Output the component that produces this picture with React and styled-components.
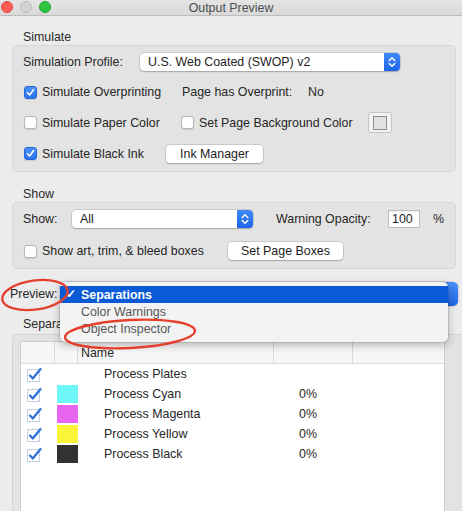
import React from "react";
import styled, { createGlobalStyle } from "styled-components";

const Global = createGlobalStyle`
  html, body { margin: 0; padding: 0; background: #ececec; }
  body { font-family: "Liberation Sans", Arial, Helvetica, sans-serif; }
  * { box-sizing: border-box; }
`;

const Window = styled.div`
  position: relative;
  width: 462px;
  height: 511px;
  overflow: hidden;
  background: #ececec;
  display: flex;
  flex-direction: column;
  font-size: 12.4px;
  color: #262626;
`;

const TitleBar = styled.div`
  flex-shrink: 0;
  height: 16px;
  display: grid;
  grid-template-columns: 1fr auto 1fr;
  align-items: center;
  background: linear-gradient(#e4e4e4, #d9d9d9);
  border-bottom: 1px solid #bdbdbd;
`;

const Lights = styled.div`
  display: flex;
  gap: 7px;
  padding-left: 1px;
  margin-top: -1px;
`;

const Light = styled.span`
  width: 12px;
  height: 12px;
  border-radius: 50%;
  background: ${(p) => p.$c};
  border: 0.5px solid ${(p) => p.$b};
`;

const Title = styled.div`
  font-size: 12.4px;
  color: #4d4d4d;
  line-height: 14px;
`;

const Content = styled.div`
  flex: 1;
  display: flex;
  flex-direction: column;
  padding-left: 12px;
  min-height: 0;
`;

const SectionLabel = styled.div`
  margin: ${(p) => p.$mt || 13}px 0 0 11px;
  height: 16px;
  line-height: 16px;
  color: #2a2a2a;
`;

const GroupBox = styled.div`
  width: 444px;
  background: #e3e3e3;
  border: 1px solid #d6d6d6;
  border-radius: 5px;
  padding: ${(p) => p.$pt || 0}px 0 0 10px;
  display: flex;
  flex-direction: column;
`;

const Row = styled.div`
  height: ${(p) => p.$h}px;
  display: flex;
  align-items: center;
  white-space: nowrap;
`;

const Cell = styled.div`
  width: ${(p) => p.$w}px;
  margin-left: ${(p) => p.$ml || 0}px;
  flex-shrink: 0;
  display: flex;
  align-items: center;
  gap: 5px;
`;

const Box = styled.span`
  width: 13px;
  height: 13px;
  margin-left: 1px;
  border-radius: 3px;
  display: inline-flex;
  align-items: center;
  justify-content: center;
  flex-shrink: 0;
  background: ${(p) => (p.$on ? "linear-gradient(#4a90f8, #2a74f0)" : "#ffffff")};
  border: 1px solid ${(p) => (p.$on ? "#2566d6" : "#b7b7b7")};
  box-shadow: 0 0.5px 1px rgba(0, 0, 0, 0.12);
`;

const Check = ({ on }) => (
  <Box $on={on}>
    {on && (
      <svg width="9" height="9" viewBox="0 0 9 9">
        <path d="M1.5 4.8 L3.6 7 L7.6 1.6" stroke="#fff" strokeWidth="1.6" fill="none" strokeLinecap="round" strokeLinejoin="round" />
      </svg>
    )}
  </Box>
);

const Select = styled.div`
  width: ${(p) => p.$w}px;
  height: 18px;
  background: #fff;
  border-radius: 4px;
  box-shadow: 0 0 0 0.5px rgba(0, 0, 0, 0.22), 0 1px 1.5px rgba(0, 0, 0, 0.18);
  display: flex;
  align-items: center;
  flex-shrink: 0;
`;

const SelectText = styled.span`
  flex: 1;
  padding-left: 8px;
  color: #1e1e1e;
`;

const Arrow = styled.span`
  width: 16px;
  height: 18px;
  border-radius: 0 4px 4px 0;
  background: linear-gradient(#3f8af7, #1e66e9);
  display: flex;
  align-items: center;
  justify-content: center;
`;

const Chevrons = () => (
  <svg width="8" height="12" viewBox="0 0 8 12">
    <path d="M1.2 4.6 L4 1.8 L6.8 4.6 M1.2 7.4 L4 10.2 L6.8 7.4" stroke="#fff" strokeWidth="1.4" fill="none" strokeLinecap="round" strokeLinejoin="round" />
  </svg>
);

const Button = styled.div`
  width: ${(p) => p.$w}px;
  height: 18px;
  background: #fff;
  border-radius: 4px;
  box-shadow: 0 0 0 0.5px rgba(0, 0, 0, 0.22), 0 1px 1.5px rgba(0, 0, 0, 0.18);
  display: flex;
  align-items: center;
  justify-content: center;
  color: #1e1e1e;
  flex-shrink: 0;
`;

const ColorWell = styled.div`
  width: 24px;
  height: 21px;
  background: #f3f3f3;
  border: 1px solid #c6c6c6;
  border-radius: 2px;
  display: flex;
  align-items: center;
  justify-content: center;
`;

const WellInner = styled.div`
  width: 14px;
  height: 14px;
  border: 1px solid #8c8c8c;
  background: #e2e2e2;
`;

const NumInput = styled.div`
  width: 32px;
  height: 18px;
  background: #fff;
  border: 1px solid #bdbdbd;
  box-shadow: inset 0 1px 0 rgba(0, 0, 0, 0.06);
  padding-left: 3px;
  display: flex;
  align-items: center;
  color: #1e1e1e;
`;

const PreviewRow = styled.div`
  position: relative;
  margin: 13px 0 0 -2px;
  height: 24px;
  display: flex;
  align-items: center;
`;

const PreviewSelect = styled.div`
  margin-left: auto;
  width: 396px;
  height: 24px;
  border-radius: 5px;
  background: linear-gradient(#4a90f8, #1f66e9);
  box-shadow: 0 0 0 0.5px rgba(0, 0, 0, 0.2);
  margin-right: 4px;
`;

const Menu = styled.div`
  position: absolute;
  left: 50px;
  top: 0;
  width: 388px;
  height: 60px;
  background: #f3f3f3;
  border-radius: 5px;
  box-shadow: 0 0 0 0.5px rgba(0, 0, 0, 0.18), 0 3px 9px rgba(0, 0, 0, 0.28);
  padding-top: 4px;
  z-index: 2;
`;

const MenuItem = styled.div`
  height: 17px;
  display: flex;
  align-items: center;
  padding-left: 21px;
  position: relative;
  background: ${(p) => (p.$sel ? "#0a5ad6" : "transparent")};
  color: ${(p) => (p.$sel ? "#ffffff" : "#565656")};
  font-weight: ${(p) => (p.$sel ? 700 : 400)};
`;

const Tick = styled.span`
  position: absolute;
  left: 6px;
  top: 0;
  line-height: 17px;
  font-weight: 700;
`;

const SepBox = styled.div`
  margin-top: 2px;
  flex: 1;
  background: #e3e3e3;
  border: 1px solid #d4d4d4;
  border-right: none;
  border-bottom: none;
  border-radius: 5px 0 0 0;
  padding: 6px 0 0 7px;
  display: flex;
  min-height: 0;
`;

const List = styled.div`
  width: 425px;
  background: #fff;
  border: 1px solid #cdcdcd;
  border-bottom: none;
  display: flex;
  flex-direction: column;
`;

const Header = styled.div`
  height: 22px;
  display: flex;
  background: #f6f6f6;
  border-bottom: 1px solid #dcdcdc;
  flex-shrink: 0;
`;

const HeadCell = styled.div`
  width: ${(p) => p.$w}px;
  flex-shrink: 0;
  border-right: ${(p) => (p.$last ? "none" : "1px solid #d9d9d9")};
  padding-left: ${(p) => p.$pl || 0}px;
  display: flex;
  align-items: center;
  color: #2a2a2a;
`;

const ItemRow = styled.div`
  height: 20px;
  display: flex;
  align-items: center;
`;

const Col = styled.div`
  width: ${(p) => p.$w}px;
  padding-left: ${(p) => p.$pl || 0}px;
  flex-shrink: 0;
  display: flex;
  align-items: center;
  color: #262626;
`;

const Swatch = styled.div`
  width: 21px;
  height: 18px;
  background: ${(p) => p.$c};
`;

const OldCheck = () => (
  <svg width="16" height="15" viewBox="0 0 16 15">
    <rect x="0.5" y="2.5" width="12" height="12" fill="#fff" stroke="#9cb0cf" strokeDasharray="1 0.6" />
    <path d="M3 8.5 L5.8 11.5 L13.5 2" stroke="#2f6fd8" strokeWidth="2.2" fill="none" strokeLinecap="round" strokeLinejoin="round" />
    <path d="M12 1.5 L14.5 3.5" stroke="#6d9be6" strokeWidth="1" fill="none" />
  </svg>
);

const Overlay = styled.svg`
  position: absolute;
  left: 0;
  top: 0;
  pointer-events: none;
  z-index: 5;
`;

const plates = [
  { name: "Process Plates", color: null, pct: "" },
  { name: "Process Cyan", color: "#6ff7f8", pct: "0%" },
  { name: "Process Magenta", color: "#e865f0", pct: "0%" },
  { name: "Process Yellow", color: "#fbf53a", pct: "0%" },
  { name: "Process Black", color: "#323232", pct: "0%" },
];

export default function App() {
  return (
    <>
      <Global />
      <Window>
        <TitleBar>
          <Lights>
            <Light $c="#fd5d55" $b="#e0443e" />
            <Light $c="#d3d3d3" $b="#bdbdbd" />
            <Light $c="#2bc541" $b="#1fa332" />
          </Lights>
          <Title>Output Preview</Title>
          <div />
        </TitleBar>
        <Content>
          <SectionLabel>Simulate</SectionLabel>
          <GroupBox $pt={1}>
            <Row $h={30}>
              <Cell $w={117}>Simulation Profile:</Cell>
              <Select $w={260}>
                <SelectText>U.S. Web Coated (SWOP) v2</SelectText>
                <Arrow><Chevrons /></Arrow>
              </Select>
            </Row>
            <Row $h={30}>
              <Cell $w={159}><Check on />Simulate Overprinting</Cell>
              <Cell $w={126}>Page has Overprint:</Cell>
              <span>No</span>
            </Row>
            <Row $h={31}>
              <Cell $w={157}><Check />Simulate Paper Color</Cell>
              <Cell $w={188}><Check />Set Page Background Color</Cell>
              <ColorWell><WellInner /></ColorWell>
            </Row>
            <Row $h={31}>
              <Cell $w={143}><Check on />Simulate Black Ink</Cell>
              <Button $w={97}>Ink Manager</Button>
            </Row>
            <Row $h={2} />
          </GroupBox>

          <SectionLabel $mt={14}>Show</SectionLabel>
          <GroupBox>
            <Row $h={31}>
              <Cell $w={49}>Show:</Cell>
              <Select $w={181}>
                <SelectText>All</SelectText>
                <Arrow><Chevrons /></Arrow>
              </Select>
              <Cell $w={112} $ml={23}>Warning Opacity:</Cell>
              <NumInput>100</NumInput>
              <Cell $w={14} $ml={13}>%</Cell>
            </Row>
            <Row $h={34}>
              <Cell $w={205}><Check />Show art, trim, &amp; bleed boxes</Cell>
              <Button $w={115}>Set Page Boxes</Button>
            </Row>
          </GroupBox>

          <PreviewRow>
            <span>Preview:</span>
            <PreviewSelect />
            <Menu>
              <MenuItem $sel><Tick>✓</Tick>Separations</MenuItem>
              <MenuItem>Color Warnings</MenuItem>
              <MenuItem>Object Inspector</MenuItem>
            </Menu>
          </PreviewRow>

          <SectionLabel $mt={10}>Separations</SectionLabel>
          <SepBox>
            <List>
              <Header>
                <HeadCell $w={34} />
                <HeadCell $w={23} />
                <HeadCell $w={196} $pl={3}>Name</HeadCell>
                <HeadCell $w={79} />
                <HeadCell $w={90} $last />
              </Header>
              {plates.map((p) => (
                <ItemRow key={p.name}>
                  <Col $w={34} $pl={6}><OldCheck /></Col>
                  <Col $w={23} $pl={2}>{p.color && <Swatch $c={p.color} />}</Col>
                  <Col $w={196} $pl={26}>{p.name}</Col>
                  <Col $w={79} $pl={25}>{p.pct}</Col>
                </ItemRow>
              ))}
            </List>
          </SepBox>
        </Content>
        <Overlay width="462" height="511" viewBox="0 0 462 511">
          <ellipse cx="35" cy="295" rx="33" ry="14.5" transform="rotate(-8 35 295)" fill="none" stroke="#e4402e" strokeWidth="2.4" />
          <ellipse cx="130" cy="334" rx="65" ry="14" transform="rotate(-3 130 334)" fill="none" stroke="#e4402e" strokeWidth="2.4" />
        </Overlay>
      </Window>
    </>
  );
}
